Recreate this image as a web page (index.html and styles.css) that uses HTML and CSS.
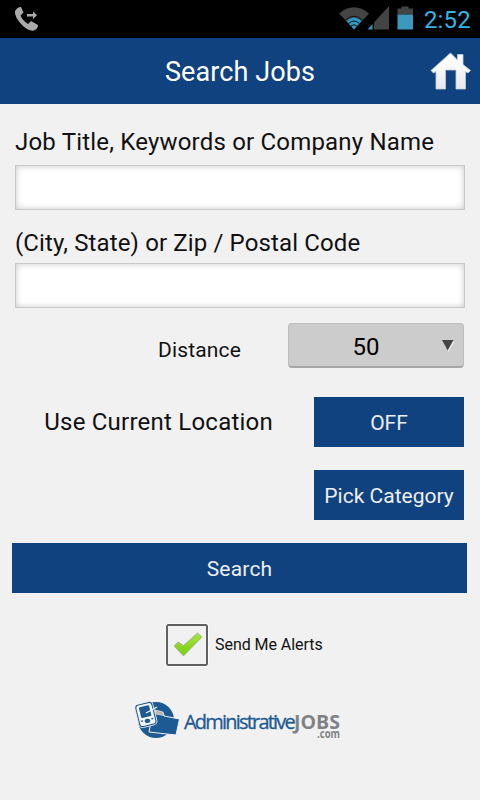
FILE: index.html
```html
<!DOCTYPE html>
<html lang="en">
  <head>
    <meta charset="utf-8" />
    <title>Search Jobs</title>
    <link rel="stylesheet" href="styles.css">
  </head>
  <body>
    <div class="statusBar">
      <svg class="call" width="26" height="26" viewBox="0 0 26 26">
        <path fill="#aaa" d="M3 2.500Q5 .5 7 1L9.500 6.500L6.500 9.500Q8.500 14.500 14 18L17 15L24 19Q24 23 20 24.500Q15 25.500 9 20Q0 11 1 5Z"/>
        <path fill="#aaa" d="M13 8h6V5.500l4 3.700-4 3.700v-2.500h-6z"/>
      </svg>
      <div class="indicators">
        <svg width="80" height="24" viewBox="0 0 80 24">
          <path fill="#444" d="M0 7.500Q15-5 30 7.500L15 23.500Z"/>
          <path fill="#2c98c4" d="M7.500 15Q15 8 22.500 15L15 23.500Z"/>
          <path fill="none" stroke="#111" stroke-width="1" d="M6.500 14Q15 6.500 23.500 14M9.500 17.500Q15 12.500 20.500 17.500M12 20Q15 17.500 18 20"/>
          <path fill="#444" d="M35 23.500V16.500L50 0v23.500z"/>
          <path fill="#2c98c4" d="M28.500 23.500l5-5.500v5.500z"/>
          <path fill="#444" d="M58.500 2.500h4V.5h7v2h4.500v6H58.500z"/>
          <path fill="#3b99bd" d="M58.500 8.500h15.500v15H58.500z"/>
        </svg>
        <span class="clock">2:52</span>
      </div>
    </div>

    <div class="header">
      <h1>Search Jobs</h1>
      <svg class="home" width="42" height="38" viewBox="0 0 42 38">
        <defs>
          <linearGradient id="roof" x1="0" y1="0" x2="0" y2="1">
            <stop offset="0" stop-color="#fff"/>
            <stop offset=".5" stop-color="#f6f6f6"/>
            <stop offset="1" stop-color="#e8e8e8"/>
          </linearGradient>
        </defs>
        <path fill="url(#roof)" stroke="#c5ced8" stroke-width=".8" d="M20.500 1L27.500 8V2.500H33V12.500L40.500 18.500L38 21L35.500 19.500V37H26V18H15.500V37H6V19.500L3.500 21L1 18.500Z"/>
      </svg>
    </div>

    <form class="search">
      <label for="keywords">Job Title, Keywords or Company Name</label>
      <input id="keywords" type="text" name="keywords"/>
      <label class="place" for="location">(City, State) or Zip / Postal Code</label>
      <input id="location" type="text" name="location"/>

      <div class="row distance">
        <span>Distance</span>
        <div class="picker">
          <span>50</span>
          <svg width="14" height="12" viewBox="0 0 14 12">
            <path fill="#eee" d="M2 1.500h11.500L7.500 12z"/>
            <path fill="#444" d="M1 0h11.500L6.700 10.500z"/>
          </svg>
        </div>
      </div>

      <div class="row current">
        <span>Use Current Location</span>
        <button type="button">OFF</button>
      </div>

      <div class="row category">
        <button type="button">Pick Category</button>
      </div>

      <button class="submit" type="button">Search</button>
    </form>

    <div class="alerts">
      <div class="check">
        <svg width="30" height="26" viewBox="0 0 30 26">
          <defs>
            <linearGradient id="tick" x1="0" y1="0" x2="0" y2="1">
              <stop offset="0" stop-color="#a8e43c"/>
              <stop offset="1" stop-color="#76cf0d"/>
            </linearGradient>
          </defs>
          <path fill="url(#tick)" stroke="#aab3a6" stroke-width="1" stroke-linejoin="round" d="M1 14L5 10L10.500 13.500L24.500 1L29 5L10.500 24Z"/>
        </svg>
      </div>
      <span>Send Me Alerts</span>
    </div>

    <div class="brand">
      <svg width="208" height="46" viewBox="0 0 208 46">
        <circle cx="21" cy="19" r="18" fill="#1d5a93"/>
        <path fill="#1d5a93" stroke="#f1f1f1" stroke-width="1" d="M18 10L28 12L29 15L44.500 18L41 34L14 31Z"/>
        <path fill="#b9b4ac" stroke="#f1f1f1" stroke-width=".7" d="M20 9L28 11L29 14.500L21 13Z"/>
        <g transform="rotate(-14 11 13)">
          <rect x="1.500" y="1.500" width="18.500" height="24" rx="4" fill="#1d5a93" stroke="#f1f1f1" stroke-width=".8"/>
          <rect x="3" y="3" width="15.500" height="21" rx="2.800" fill="#f4f6f8"/>
          <rect x="5.500" y="5" width="10.500" height="11" rx="1" fill="#1d5a93"/>
          <ellipse cx="10.800" cy="20" rx="2.800" ry="2.100" fill="#1d5a93"/>
          <path stroke="#1d5a93" stroke-width="1.200" d="M4.500 19h2M15 19h2"/>
        </g>
        <path stroke="#f4f6f8" stroke-width="1.200" d="M11 12L22 6"/>
        <text class="name" x="49" y="27.500">Administrative</text>
        <text class="jobs" x="159" y="27.500" textLength="46" lengthAdjust="spacingAndGlyphs">JOBS</text>
        <text class="com" x="182" y="37" textLength="23" lengthAdjust="spacingAndGlyphs">.com</text>
      </svg>
    </div>
  </body>
</html>
```

FILE: styles.css
```css
body {
  margin: 0;
  background: #f1f1f1;
  color: #111;
  font-family: Roboto, "Liberation Sans", sans-serif;
}

svg {
  display: block;
}

.statusBar {
  height: 38px;
  background: #000;
  display: flex;
  justify-content: space-between;
  align-items: flex-start;
  padding: 0 9px 0 14px;
  box-sizing: border-box;
}

.call {
  margin-top: 6px;
}

.indicators {
  display: flex;
  gap: 5px;
}

.indicators svg {
  margin-top: 6px;
}

.clock {
  color: #33b5e5;
  font-size: 24px;
  line-height: 40px;
  letter-spacing: .2px;
}

.header {
  height: 66px;
  background: #10427f;
  display: grid;
  grid-template-columns: 50px 1fr 50px;
  align-items: center;
}

h1 {
  grid-column: 2;
  margin: 0;
  padding-top: 2px;
  color: #fff;
  font-size: 27px;
  font-weight: 400;
  letter-spacing: .1px;
  text-align: center;
}

.home {
  margin-top: -1px;
}

.search {
  padding: 24px 15px 0;
}

label {
  display: block;
  height: 37px;
  line-height: 28px;
  font-size: 24px;
  letter-spacing: .19px;
  white-space: nowrap;
}

.place {
  margin-top: 19px;
  height: 34px;
  letter-spacing: .13px;
}

input {
  display: block;
  width: 450px;
  height: 45px;
  box-sizing: border-box;
  border: 1px solid #c8c8c8;
  background: #fff;
  box-shadow: inset 0 0 6px #c8c8c8;
  font: inherit;
}

.row {
  display: flex;
  justify-content: flex-end;
  align-items: center;
  padding-right: 1px;
}

.distance {
  margin-top: 15px;
  font-size: 21px;
  letter-spacing: .15px;
  gap: 47px;
}

.distance > span {
  padding-top: 8px;
}

.picker {
  width: 176px;
  height: 45px;
  box-sizing: border-box;
  border: 1px solid #bdbdbd;
  border-bottom: 2px solid #a5a5a5;
  border-radius: 4px;
  background: #ccc;
  color: #000;
  display: grid;
  grid-template-columns: 1fr 14px;
  align-items: center;
  padding: 1px 8px 0 0;
  font-size: 24px;
  letter-spacing: 0;
  text-align: center;
}

.picker span {
  padding: 2px 0 0 2px;
}

.current {
  margin-top: 29px;
  font-size: 24px;
  letter-spacing: .23px;
  gap: 41px;
}

button {
  width: 150px;
  height: 50px;
  padding: 2px 0 0;
  border: 0;
  background: #10427f;
  color: #eeeef5;
  font: 21px Roboto, "Liberation Sans", sans-serif;
  letter-spacing: 0;
}

.category {
  margin-top: 23px;
}

.submit {
  display: block;
  width: 455px;
  margin: 23px 0 0 -3px;
  letter-spacing: .2px;
}

.alerts {
  margin: 31px 0 0 166px;
  display: flex;
  align-items: center;
  gap: 7px;
  font-size: 16px;
  letter-spacing: -.05px;
}

.alerts span {
  padding-bottom: 2px;
}

.check {
  width: 42px;
  height: 42px;
  box-sizing: border-box;
  border: 2px solid #606060;
  border-radius: 2px;
  outline: 1px solid #fafafa;
  display: grid;
  place-items: center;
  padding-left: 2px;
}

.brand {
  margin: 35px 0 0 135px;
}

.name {
  font: 20px "Open Sans", sans-serif;
  letter-spacing: -1.8px;
  fill: #1d5a93;
  stroke: #1d5a93;
  stroke-width: .3px;
}

.jobs {
  font: 700 20px "Open Sans", sans-serif;
  fill: #808285;
}

.com {
  font: 700 12px "Open Sans", sans-serif;
  fill: #808285;
}
```
